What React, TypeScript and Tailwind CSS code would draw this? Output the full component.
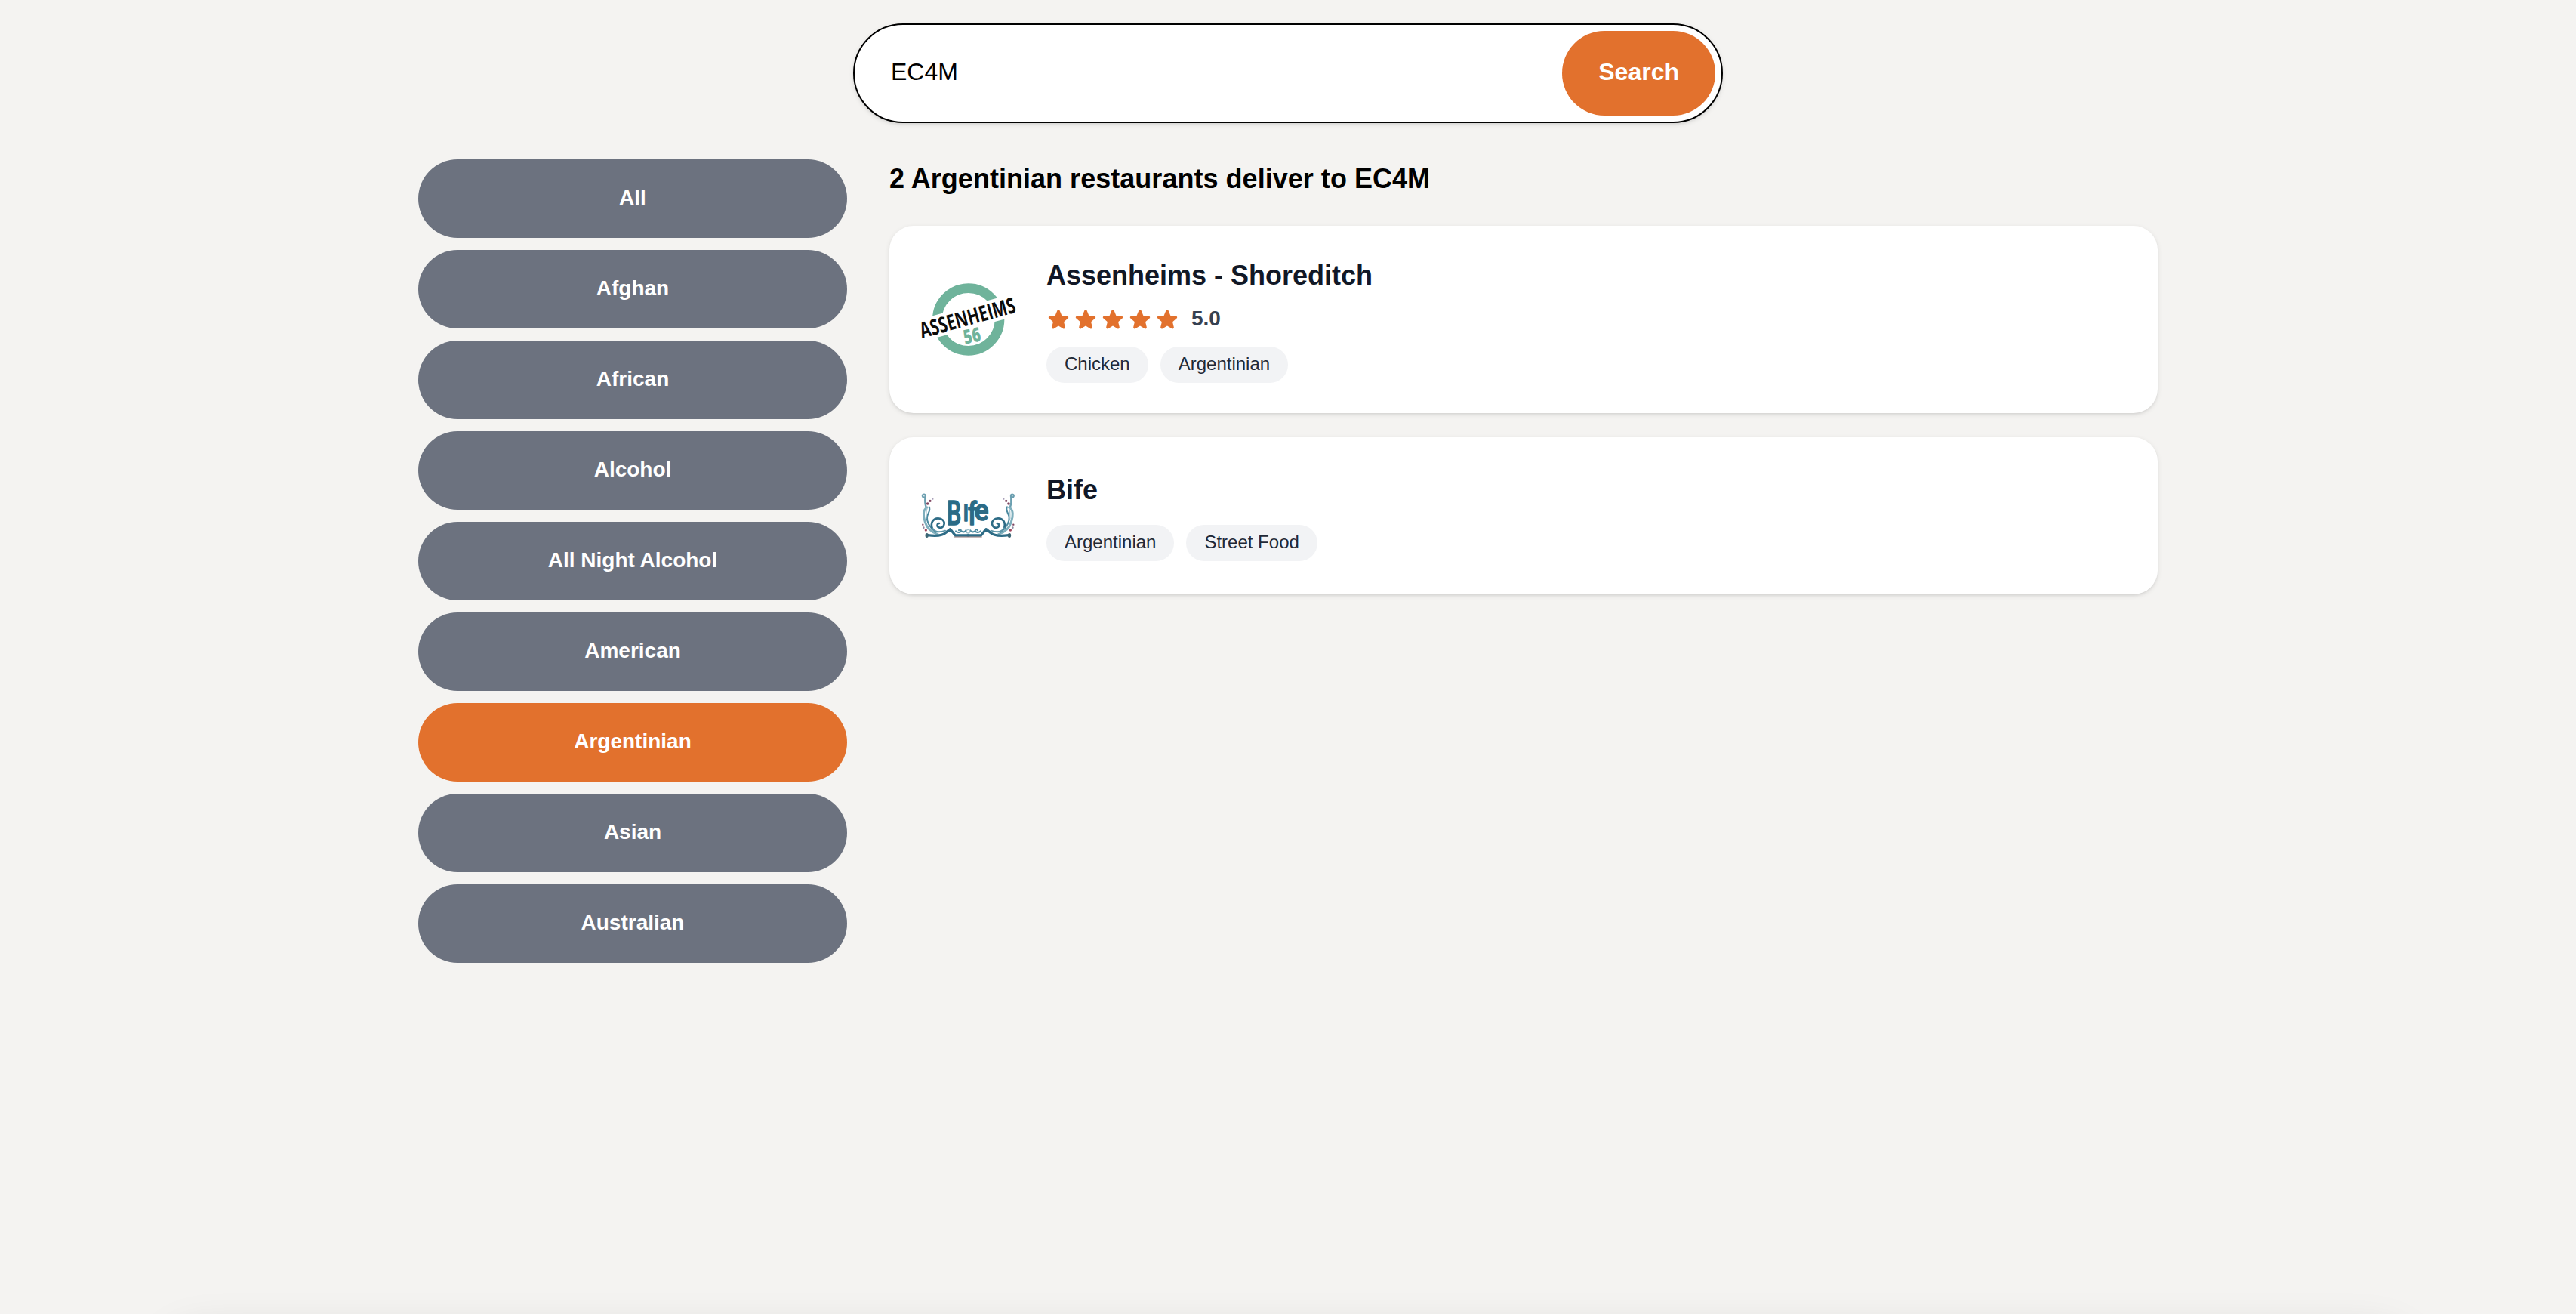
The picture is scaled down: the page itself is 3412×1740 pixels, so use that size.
const cuisines = [
  'All',
  'Afghan',
  'African',
  'Alcohol',
  'All Night Alcohol',
  'American',
  'Argentinian',
  'Asian',
  'Australian',
];

function Star() {
  return (
    <svg viewBox="0 0 24 24" className="size-8 fill-[#e2712d]">
      <path d="M10.788 3.21c.448-1.077 1.976-1.077 2.424 0l2.082 5.006 5.404.434c1.164.093 1.636 1.545.749 2.305l-4.117 3.527 1.257 5.273c.271 1.136-.964 2.033-1.96 1.425L12 18.354 7.373 21.18c-.996.608-2.231-.29-1.96-1.425l1.257-5.273-4.117-3.527c-.887-.76-.415-2.212.749-2.305l5.404-.434 2.082-5.005Z" />
    </svg>
  );
}

function AssenheimsLogo() {
  return (
    <svg viewBox="54 27 384 384" className="size-32 shrink-0 overflow-visible">
      <circle cx="248" cy="219" r="124" fill="none" stroke="#6fb39b" strokeWidth="38" />
      <polygon points="80,212 380,129 420,210 100,297" fill="#fff" />
      <text
        transform="translate(64 294) rotate(-15.5)"
        fontFamily="Open Sans"
        fontWeight="700"
        fontSize="86"
        textLength="391"
        lengthAdjust="spacingAndGlyphs"
        fill="#0b0b0b"
      >
        ASSENHEIMS
      </text>
      <text
        transform="translate(234 317) rotate(-11)"
        fontFamily="Open Sans"
        fontWeight="800"
        fontSize="78"
        textLength="68"
        lengthAdjust="spacingAndGlyphs"
        fill="#6fb39b"
      >
        56
      </text>
    </svg>
  );
}

function BifeFlourish() {
  return (
    <g fill="none" strokeLinecap="round">
      <path d="M72 86a6 6 0 1 1 5-9c0 14-5 28 3 48" stroke="#6b9fb0" strokeWidth="7" />
      <path d="M84 126c-18 8-16 36-8 58 6 20 18 38 50 48" stroke="#7fafbd" strokeWidth="9" />
      <path d="M92 124c8 14-6 24-8 40s8 40 34 60" stroke="#4c8aa0" strokeWidth="6" />
      <path d="M84 130c-6 14-2 24-4 40" stroke="#a9c8d2" strokeWidth="4" />
      <path d="M86 236c34 4 62 0 72-10l18-14 20 25h52" stroke="#2e6c86" strokeWidth="10" strokeLinejoin="round" />
      <ellipse cx="83" cy="237" rx="6.5" ry="9" fill="#3c6674" />
      <path d="M106 212c-12-24 2-43 22-43 16 0 25 11 24 22-1 12-12 18-22 14-8-4-7-15 2-16" stroke="#2e6c86" strokeWidth="8" />
      <path d="M104 208c8 14 24 20 52 10" stroke="#5d95a8" strokeWidth="6" />
      <path d="M198 220c8 8 18 6 20-1 2-8-8-8-8-2m12 4c6 4 14 2 16-4" stroke="#4c8aa0" strokeWidth="6" />
      <g stroke="none" fill="#7f4560">
        <circle cx="86" cy="111" r="5.5" />
        <circle cx="96" cy="100" r="5" />
        <circle cx="106" cy="92" r="3.5" fill="#a9a0b8" />
        <circle cx="67" cy="194" r="3.5" />
        <circle cx="70" cy="206" r="4" fill="#8f8ca3" />
        <circle cx="79" cy="216" r="5" fill="#a0465c" />
      </g>
    </g>
  );
}

function BifeLogo() {
  return (
    <svg viewBox="54 -33 384 384" className="size-32 shrink-0">
      <BifeFlourish />
      <g transform="translate(494 0) scale(-1 1)">
        <BifeFlourish />
      </g>
      <circle cx="247" cy="221" r="7" fill="none" stroke="#9cc0cb" strokeWidth="4" />
      <path d="M192 243h110" stroke="#8d7474" strokeWidth="3" />
      <g fontFamily="Roboto" fontWeight="500" fill="#2b6b86" stroke="#2b6b86" strokeWidth="5" strokeLinejoin="round">
        <text transform="translate(162 195) scale(.68 1)" fontSize="134">B</text>
        <text transform="translate(227 179) scale(.8 1)" fontSize="96">I</text>
        <text transform="translate(246 195) scale(.78 1)" fontSize="130">f</text>
        <text transform="translate(272 176) scale(.9 1)" fontSize="116">e</text>
      </g>
    </svg>
  );
}

const restaurants = [
  { name: 'Assenheims - Shoreditch', rating: '5.0', tags: ['Chicken', 'Argentinian'], Logo: AssenheimsLogo },
  { name: 'Bife', rating: null, tags: ['Argentinian', 'Street Food'], Logo: BifeLogo },
];

export default function App() {
  return (
    <div className="flex h-[1740px] w-full flex-col overflow-hidden bg-[#f4f3f1] pt-[31px] font-['Liberation_Sans',Arial,sans-serif] text-black">
      <form className="mx-auto flex h-[132px] w-[1152px] shrink-0 items-center rounded-full border-2 border-black bg-white p-2 shadow-[0_2px_6px_rgba(0,0,0,0.1),0_2px_4px_-2px_rgba(0,0,0,0.1)]">
        <input
          defaultValue="EC4M"
          className="h-full min-w-0 flex-1 bg-transparent pb-1 pl-10 text-[32px] outline-none"
        />
        <button type="button" className="h-28 rounded-full bg-[#e2712d] px-12 pb-1 text-[32px] font-bold text-white">
          Search
        </button>
      </form>

      <div className="mx-auto mt-12 flex w-[2304px] items-start gap-14">
        <nav className="flex w-[568px] shrink-0 flex-col gap-4">
          {cuisines.map((name) => (
            <button
              key={name}
              type="button"
              className={
                name === 'Argentinian'
                  ? 'h-[104px] rounded-full bg-[#e2712d] pb-0.5 text-[28px] font-bold text-white'
                  : 'h-[104px] rounded-full bg-[#6c727f] pb-0.5 text-[28px] font-bold text-white'
              }
            >
              {name}
            </button>
          ))}
        </nav>

        <main className="flex flex-1 flex-col">
          <h1 className="mb-8 h-14 text-[36px] leading-[51px] font-bold tracking-[0.03px]">
            2 Argentinian restaurants deliver to EC4M
          </h1>
          <div className="flex flex-col gap-8">
            {restaurants.map(({ name, rating, tags, Logo }) => (
              <article
                key={name}
                className="flex items-center gap-10 rounded-[32px] bg-white p-10 shadow-[0_2px_6px_rgba(0,0,0,0.1),0_2px_4px_-2px_rgba(0,0,0,0.1)]"
              >
                <Logo />
                <div>
                  <h2 className="h-14 text-[36px] leading-[51px] font-bold text-[#111827]">{name}</h2>
                  {rating && (
                    <div className="mt-2 flex h-10 items-center gap-1">
                      <Star />
                      <Star />
                      <Star />
                      <Star />
                      <Star />
                      <span className="ml-3 pb-0.5 text-[28px] leading-9 font-bold text-[#374151]">{rating}</span>
                    </div>
                  )}
                  <div className="mt-4 flex gap-4">
                    {tags.map((tag) => (
                      <span
                        key={tag}
                        className="h-12 rounded-full bg-[#f2f3f5] px-6 text-[24px] leading-[45px] text-[#1f2937]"
                      >
                        {tag}
                      </span>
                    ))}
                  </div>
                </div>
              </article>
            ))}
          </div>
        </main>
      </div>

      {/* Soft shadow cast upward by the sheet docked below the fold */}
      <div className="mt-auto h-0 shrink-0 px-[220px]">
        <div className="h-60 translate-y-7 rounded-[48px] shadow-[0_0_60px_rgba(0,0,0,0.15)]" />
      </div>
    </div>
  );
}
